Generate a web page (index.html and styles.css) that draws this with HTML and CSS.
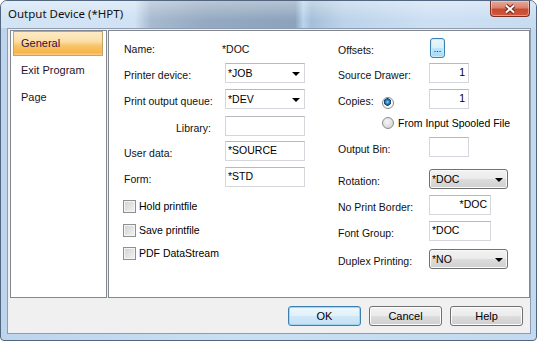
FILE: index.html
```html
<!DOCTYPE html>
<html lang="en">
  <head>
    <meta charset="UTF-8" />
    <meta name="viewport" content="width=device-width, initial-scale=1.0" />
    <title>Output Device (*HPT)</title>
    <link rel="stylesheet" href="styles.css">
  </head>

  <body>
    <div class="window">
      <!-- Title bar -->
      <div class="titlebar">
        <span class="title">Output Device (*HPT)</span>
        <button class="close-btn" aria-label="Close">
          <svg width="12" height="10" viewBox="0 0 12 10">
            <path d="M2 1.5 L10 8.5 M10 1.5 L2 8.5" stroke="#6b2a20" stroke-width="4" />
            <path d="M2 1.5 L10 8.5 M10 1.5 L2 8.5" stroke="#fff" stroke-width="2" />
          </svg>
        </button>
      </div>

      <div class="client">
        <div class="panels">
          <!-- Page list -->
          <ul class="nav">
            <li class="nav-item active">General</li>
            <li class="nav-item">Exit Program</li>
            <li class="nav-item">Page</li>
          </ul>

          <!-- General page -->
          <div class="page">
            <div class="col-left">
              <span class="lbl">Name:</span>
              <span class="lbl value">*DOC</span>

              <span class="lbl">Printer device:</span>
              <div class="combo">*JOB<span class="arrow"></span></div>

              <span class="lbl">Print output queue:</span>
              <div class="combo">*DEV<span class="arrow"></span></div>

              <span class="lbl lbl-right">Library:</span>
              <div class="field"></div>

              <span class="lbl">User data:</span>
              <div class="field">*SOURCE</div>

              <span class="lbl">Form:</span>
              <div class="field">*STD</div>

              <label class="check"><span class="box"></span>Hold printfile</label>
              <label class="check"><span class="box"></span>Save printfile</label>
              <label class="check"><span class="box"></span>PDF DataStream</label>
            </div>

            <div class="col-right">
              <span class="lbl span2">Offsets:</span>
              <button class="dots">...</button>

              <span class="lbl span2">Source Drawer:</span>
              <div class="field narrow num">1</div>

              <span class="lbl">Copies:</span>
              <span class="radio checked copies-radio"></span>
              <div class="field narrow num">1</div>

              <label class="radio-row"><span class="radio"></span>From Input Spooled File</label>

              <span class="lbl span2">Output Bin:</span>
              <div class="field narrow"></div>

              <span class="lbl span2">Rotation:</span>
              <div class="combo vista">*DOC<span class="arrow"></span></div>

              <span class="lbl span2">No Print Border:</span>
              <div class="field mid num">*DOC</div>

              <span class="lbl span2">Font Group:</span>
              <div class="field mid">*DOC</div>

              <span class="lbl span2">Duplex Printing:</span>
              <div class="combo vista">*NO<span class="arrow"></span></div>
            </div>
          </div>
        </div>

        <!-- Dialog buttons -->
        <div class="actions">
          <button class="btn default">OK</button>
          <button class="btn">Cancel</button>
          <button class="btn">Help</button>
        </div>
      </div>
    </div>
  </body>
</html>
```

FILE: styles.css
```css
/* Global Styles */
body {
  margin: 0;
  padding: 0;
  font-family: "Liberation Sans", Arial, sans-serif;
  color: #000;
}

button {
  font-family: inherit;
  padding: 0;
}

.window {
  width: 537px;
  height: 341px;
  box-sizing: border-box;
  border: 1px solid #52677f;
  border-radius: 7px 7px 4px 4px;
  background: linear-gradient(90deg, #bdd4ec, #cadff3 45%, #c3d9ef);
  overflow: hidden;
}

/* Title bar */
.titlebar {
  height: 27px;
  display: flex;
  justify-content: space-between;
  align-items: flex-start;
  padding: 0 6px 0 7px;
  background:
    linear-gradient(180deg, rgba(255, 255, 255, 0.35), rgba(255, 255, 255, 0) 70%),
    linear-gradient(90deg, #d3e4f5 0, #d0e2f4 25%, #a7bacf 28%, #95aac2 38%,
      #8ca3bc 55%, #b9d4ee 56.5%, #a6bfd8 58%, #bcd3ea 64%, #cde0f3 80%, #c8dcf1 100%);
}

.title {
  font-family: "Noto Sans", sans-serif;
  font-size: 11.5px;
  line-height: 16px;
  padding-top: 5px;
  color: #111;
}

.close-btn {
  width: 40px;
  height: 16px;
  border: 1px solid #7a2f22;
  border-top: none;
  border-radius: 0 0 4px 4px;
  background: linear-gradient(180deg, #e8a898 0, #d98470 45%, #c84a31 55%, #d0583c 100%);
  box-shadow: inset 0 0 0 1px rgba(255, 220, 210, 0.5);
  display: flex;
  justify-content: center;
  align-items: center;
}

/* Client area */
.client {
  margin: 0 5px 0 6px;
  height: 306px;
  box-sizing: border-box;
  border: 1px solid #8d9cb0;
  background: #f0f0f0;
  padding: 1px 0 0 2px;
}

.panels {
  display: flex;
  gap: 1px;
  height: 268px;
}

.nav {
  width: 97px;
  box-sizing: border-box;
  margin: 0;
  padding: 0;
  list-style: none;
  background: #fff;
  border: 1px solid #828790;
}

.nav-item {
  height: 25px;
  box-sizing: border-box;
  margin: 0 3px 2px 2px;
  padding-left: 7px;
  border: 1px solid transparent;
  font-size: 11px;
  line-height: 23px;
  color: #1e1530;
}

.nav-item.active {
  border-color: #c2a56c;
  background: linear-gradient(180deg, #fdebc6 0, #fcdfa8 40%, #f9c46a 60%, #f7b548 90%, #fad08a 100%);
  color: #2c1248;
}

.page {
  flex: 1;
  display: flex;
  box-sizing: border-box;
  border: 1px solid #828790;
  background: #fff;
  padding: 6px 0 0 14px;
  font-size: 10.5px;
}

.col-left {
  width: 214px;
  display: grid;
  grid-template-columns: 102px 80px;
  grid-template-rows: 26px 26px 27px 25px 26px 29px 24px 23px 20px;
  align-items: start;
}

.col-right {
  margin-top: 1px;
  display: grid;
  grid-template-columns: 45px 47px auto;
  grid-template-rows: 25px 26px 24px 24px 32px 26px 26px 28px 20px;
  align-items: start;
}

.lbl {
  line-height: 20px;
  padding: 2px 0 0 1px;
  white-space: nowrap;
  color: #111;
}

.lbl-right {
  text-align: right;
  padding-right: 14px;
}

.value {
  margin-left: -4px;
}

.span2 {
  grid-column: span 2;
}

/* Text boxes */
.field {
  height: 20px;
  box-sizing: border-box;
  border: 1px solid #d3d6db;
  border-top-color: #b6b9bf;
  padding: 0 2px;
  line-height: 17px;
  white-space: nowrap;
}

.field.narrow {
  width: 40px;
}

.field.mid {
  width: 62px;
}

.field.num {
  text-align: right;
  padding-right: 3px;
}

/* Combo boxes */
.combo {
  height: 20px;
  box-sizing: border-box;
  display: flex;
  justify-content: space-between;
  align-items: center;
  border: 1px solid #d3d6db;
  border-top-color: #b6b9bf;
  padding: 0 4px 1px 2px;
}

.combo.vista {
  width: 79px;
  border: 1px solid #707070;
  border-radius: 3px;
  padding-left: 2px;
  background: linear-gradient(180deg, #f2f2f2 0, #ebebeb 50%, #dddddd 50%, #cfcfcf 100%);
  box-shadow: inset 0 0 0 1px #fafafa;
}

.arrow {
  width: 0;
  height: 0;
  margin-top: 2px;
  border-left: 4px solid transparent;
  border-right: 4px solid transparent;
  border-top: 4px solid #000;
}

/* Offsets button */
.dots {
  width: 15px;
  height: 20px;
  margin-left: 1px;
  border: 1px solid #3c7fb1;
  border-radius: 3px;
  background: linear-gradient(180deg, #eaf6fd 0, #d9f0fc 50%, #bee6fd 50%, #a7d9f5 100%);
  box-shadow: inset 0 0 0 1px #cbeafc;
  font-size: 9px;
  line-height: 20px;
  color: #000;
}

/* Radio buttons */
.radio {
  width: 12px;
  height: 12px;
  box-sizing: border-box;
  border-radius: 50%;
  border: 1px solid #8c8c8c;
  background: radial-gradient(circle at 40% 35%, #f6f6f6, #d4d4d4 80%);
  display: inline-block;
  flex: none;
}

.radio.checked {
  background:
    radial-gradient(circle at 45% 40%, #8ed0f5 0, #2b7cc0 2px, #0e3f6b 3.5px, transparent 4px),
    radial-gradient(circle, #fff 55%, #e6e6e6 100%);
}

.copies-radio {
  margin-top: 8px;
}

.radio-row {
  grid-column: 2 / span 2;
  display: flex;
  align-items: center;
  gap: 4px;
  height: 20px;
  white-space: nowrap;
}

/* Check boxes */
.check {
  grid-column: span 2;
  display: flex;
  align-items: center;
  gap: 3px;
  height: 20px;
  white-space: nowrap;
}

.box {
  width: 13px;
  height: 13px;
  box-sizing: border-box;
  border: 1px solid #8e8f8f;
  background: linear-gradient(135deg, #d0d0d0, #f4f4f4);
  box-shadow: inset 0 0 0 1px #f4f4f4;
}

/* Dialog buttons */
.actions {
  display: flex;
  justify-content: flex-end;
  gap: 8px;
  margin-top: 8px;
  padding-right: 7px;
}

.btn {
  width: 73px;
  height: 20px;
  border: 1px solid #707070;
  border-radius: 3px;
  background: linear-gradient(180deg, #f2f2f2 0, #ebebeb 50%, #dddddd 50%, #cfcfcf 100%);
  box-shadow: inset 0 0 0 1px #fcfcfc;
  font-size: 11px;
  color: #000;
}

.btn.default {
  border-color: #3c7fb1;
  background: linear-gradient(180deg, #eef7fd 0, #e0f0fa 50%, #d0e8f7 50%, #c4e0f3 100%);
  box-shadow: inset 0 0 0 1px #9fd4f2;
}
```
